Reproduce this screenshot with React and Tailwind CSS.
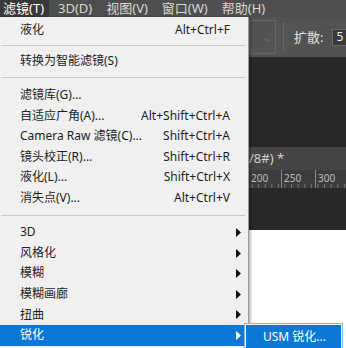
import React from 'react'

const top = [
  { t: '滤镜(T)', on: true },
  { t: '3D(D)' },
  { t: '视图(V)' },
  { t: '窗口(W)' },
  { t: '帮助(H)' },
]

const group1 = [
  ['滤镜库(G)...', ''],
  ['自适应广角(A)...', 'Alt+Shift+Ctrl+A'],
  ['Camera Raw 滤镜(C)...', 'Shift+Ctrl+A'],
  ['镜头校正(R)...', 'Shift+Ctrl+R'],
  ['液化(L)...', 'Shift+Ctrl+X'],
  ['消失点(V)...', 'Alt+Ctrl+V'],
]

const group2 = ['3D', '风格化', '模糊', '模糊画廊', '扭曲']

function Arrow({ white }){
  return (
    <svg width="5" height="9" viewBox="0 0 5 9" className="absolute left-[236px] top-[6px]">
      <path d="M0 0 L5 4.5 L0 9 Z" fill={white ? '#fff' : '#111'} />
    </svg>
  )
}

function Row({ label, keys, sub, active }){
  return (
    <div className={'relative h-[20.6px] flex items-center pl-[20px] pr-[18px] ' + (active ? 'bg-[#0a78d4] text-white' : 'text-[#1e1e1e]')}>
      <span className="flex-1 whitespace-nowrap">{label}</span>
      {keys && <span className="whitespace-nowrap">{keys}</span>}
      {sub && <Arrow white={active} />}
    </div>
  )
}

function Sep({ h }){
  return (
    <div className={'flex items-center pl-[1px] pr-[3px] ' + h}>
      <div className="h-px w-full bg-[#c9c9c9]" />
    </div>
  )
}

export default function App(){
  return (
    <div className="relative w-[346px] h-[348px] overflow-hidden bg-[#282828] font-['Noto_Sans','Noto_Sans_CJK_SC',sans-serif] text-[12px] leading-none">
      {/* app menu bar */}
      <div className="h-[17px] bg-[#4e4e4e] flex items-center text-[#d8d8d8] text-[13px] whitespace-nowrap">
        {top.map((m,i)=>(
          <div key={i} className={'h-full flex items-center shrink-0 ' + (m.on ? 'bg-[#383838] text-white pl-[3px] pr-[5px] mr-[7px]' : 'px-[2px] mr-[10px]')}>{m.t}</div>
        ))}
      </div>

      {/* options bar */}
      <div className="h-[40px] bg-[#535353] flex items-center pl-[249px] whitespace-nowrap">
        <div className="shrink-0 w-[27px] h-[34px] border border-[#656565] flex items-center justify-end pr-[4px] text-[#777] text-[9px]">⌄</div>
        <div className="shrink-0 w-px h-[30px] bg-[#666] ml-[7px]" />
        <span className="shrink-0 ml-[10px] text-[#e0e0e0] text-[13px]">扩散:</span>
        <div className="shrink-0 ml-[9px] w-[20px] h-[17px] bg-[#3a3a3a] border border-[#6a6a6a] text-[#eee] flex items-center pl-[3px]">5</div>
      </div>

      <div className="h-[90px] bg-[#282828]" />

      {/* document tab */}
      <div className="h-[23px] bg-[#454545] flex items-center pl-[249px] text-[#d0d0d0] text-[13px]">/8#) *</div>

      {/* ruler */}
      <svg width="346" height="18" className="block bg-[#3c3c3c]">
        {[248, 281, 315].map(x=>(<line key={x} x1={x+0.5} y1="0" x2={x+0.5} y2="18" stroke="#8a8a8a" />))}
        {Array.from({length: 16}).map((_,i)=>(<line key={i} x1={252+i*6.6} y1="14" x2={252+i*6.6} y2="18" stroke="#777" />))}
        <text x="251" y="12" fill="#bdbdbd" fontSize="10">200</text>
        <text x="284" y="12" fill="#bdbdbd" fontSize="10">250</text>
        <text x="318" y="12" fill="#bdbdbd" fontSize="10">300</text>
      </svg>

      <div className="h-[42px] bg-[#282828]" />
      <div className="h-[118px] bg-white" />

      {/* filter menu */}
      <div className="absolute left-0 top-[17px] w-[249px] h-[340px] bg-[#f0f0f0] border-r border-[#9a9a9a] shadow-[2px_0_2px_rgba(0,0,0,0.25)] pt-[3px]">
        <Row label="液化" keys="Alt+Ctrl+F" />
        <Sep h="h-[10px]" />
        <Row label="转换为智能滤镜(S)" />
        <Sep h="h-[13.6px]" />
        {group1.map(([l,k])=>(<Row key={l} label={l} keys={k} />))}
        <Sep h="h-[13.6px]" />
        {group2.map(l=>(<Row key={l} label={l} sub />))}
        <Row label="锐化" sub active />
      </div>

      {/* submenu */}
      <div className="absolute left-[244px] top-[323px] w-[99px] h-[30px] bg-[#f0f0f0] border border-[#8fb4d6] p-px">
        <div className="h-full bg-[#0a78d4] text-white flex items-start pt-[6px] pl-[17px] whitespace-nowrap">USM 锐化...</div>
      </div>
    </div>
  )
}
